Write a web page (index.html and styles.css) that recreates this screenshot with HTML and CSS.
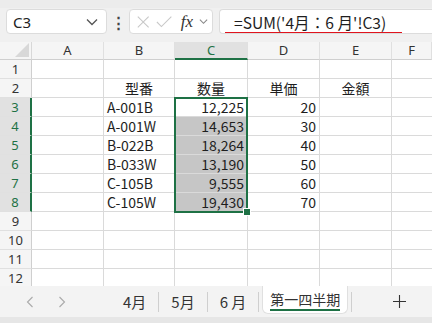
FILE: index.html
```html
<html>
<head>
	<title>第一四半期</title>
	<link rel="stylesheet" href="styles.css">
</head>
<body>
	<div class="top"></div>
	<div class="fbar">
		<div class="namebox"><span>C3</span><svg width="12" height="8" viewBox="0 0 12 8"><path d="M1 1.5 L6 6.5 L11 1.5" fill="none" stroke="#555" stroke-width="1.3"/></svg></div>
		<div class="dots">⋮</div>
		<div class="fxbox">
			<svg width="16" height="16" viewBox="0 0 16 16"><path d="M2 2 L14 14 M14 2 L2 14" stroke="#c8c8c8" stroke-width="1.2"/></svg>
			<svg width="18" height="16" viewBox="0 0 18 16"><path d="M1 8 L6 13 L17 2" fill="none" stroke="#c8c8c8" stroke-width="1.2"/></svg>
			<span class="fx">fx</span>
			<svg width="10" height="7" viewBox="0 0 10 7"><path d="M1 1.5 L5 5.5 L9 1.5" fill="none" stroke="#888" stroke-width="1.2"/></svg>
		</div>
		<div class="formula"><span>=SUM('4月：6 月'!C3)</span></div>
	</div>
	<div class="gap"></div>
	<div class="sheet">
		<div class="corner"><svg width="14" height="14" viewBox="0 0 14 14"><path d="M14 0 L14 14 L0 14 Z" fill="#d8d8d8"/></svg></div>
		<div class="ch">A</div><div class="ch">B</div><div class="ch sel">C</div><div class="ch">D</div><div class="ch">E</div><div class="ch last">F</div>

		<div class="rh">1</div><div class="c"></div><div class="c"></div><div class="c"></div><div class="c"></div><div class="c"></div><div class="c last"></div>
		<div class="rh">2</div><div class="c"></div><div class="c ctr">型番</div><div class="c ctr">数量</div><div class="c ctr">単価</div><div class="c ctr">金額</div><div class="c last"></div>
		<div class="rh on">3</div><div class="c"></div><div class="c">A-001B</div><div class="c num act">12,225</div><div class="c num">20</div><div class="c"></div><div class="c last"></div>
		<div class="rh on">4</div><div class="c"></div><div class="c">A-001W</div><div class="c num hl">14,653</div><div class="c num">30</div><div class="c"></div><div class="c last"></div>
		<div class="rh on">5</div><div class="c"></div><div class="c">B-022B</div><div class="c num hl">18,264</div><div class="c num">40</div><div class="c"></div><div class="c last"></div>
		<div class="rh on">6</div><div class="c"></div><div class="c">B-033W</div><div class="c num hl">13,190</div><div class="c num">50</div><div class="c"></div><div class="c last"></div>
		<div class="rh on">7</div><div class="c"></div><div class="c">C-105B</div><div class="c num hl">9,555</div><div class="c num">60</div><div class="c"></div><div class="c last"></div>
		<div class="rh on">8</div><div class="c"></div><div class="c">C-105W</div><div class="c num hl">19,430</div><div class="c num">70</div><div class="c"></div><div class="c last"></div>
		<div class="rh">9</div><div class="c"></div><div class="c"></div><div class="c"></div><div class="c"></div><div class="c"></div><div class="c last"></div>
		<div class="rh">10</div><div class="c"></div><div class="c"></div><div class="c"></div><div class="c"></div><div class="c"></div><div class="c last"></div>
		<div class="rh">11</div><div class="c"></div><div class="c"></div><div class="c"></div><div class="c"></div><div class="c"></div><div class="c last"></div>
		<div class="rh">12</div><div class="c"></div><div class="c"></div><div class="c"></div><div class="c"></div><div class="c"></div><div class="c last"></div>

		<div class="selbox"><div class="handle"></div></div>
	</div>
	<div class="tabs">
		<div class="arrows">
			<svg width="8" height="12" viewBox="0 0 8 12"><path d="M6.5 1 L1.5 6 L6.5 11" fill="none" stroke="#aaa" stroke-width="1.1"/></svg>
			<svg width="8" height="12" viewBox="0 0 8 12"><path d="M1.5 1 L6.5 6 L1.5 11" fill="none" stroke="#aaa" stroke-width="1.1"/></svg>
		</div>
		<div class="tab">4月</div>
		<div class="sep"></div>
		<div class="tab">5月</div>
		<div class="sep"></div>
		<div class="tab">6 月</div>
		<div class="sep"></div>
		<div class="tab active"><span>第一四半期</span></div>
		<div class="sep"></div>
		<div class="plus"><svg width="13" height="13" viewBox="0 0 13 13"><path d="M6.5 0 V13 M0 6.5 H13" stroke="#333" stroke-width="1.1"/></svg></div>
	</div>
	<div class="bottom"></div>
</body>
</html>
```

FILE: styles.css
```css
body {
	margin: 0;
	width: 432px;
	height: 323px;
	overflow: hidden;
	background-color: #f0f0f0;
	font-family: "Noto Sans", "Noto Sans CJK JP", sans-serif;
	color: #1e1e1e;
}

.top {
	height: 8px;
	background-color: #ececec;
}

.fbar {
	display: flex;
	align-items: center;
	height: 27px;
	padding-left: 6px;
}

.namebox {
	width: 101px;
	height: 25px;
	box-sizing: border-box;
	background-color: white;
	border: 1px solid #dcdcdc;
	border-radius: 4px;
	display: flex;
	align-items: center;
	justify-content: space-between;
	padding: 0 8px 0 6px;
	font-size: 15px;
}

.namebox span {
	color: #222;
}

.dots {
	width: 22px;
	text-align: center;
	font-size: 15px;
	font-weight: bold;
	color: #444;
}

.fxbox {
	width: 84px;
	height: 25px;
	box-sizing: border-box;
	background-color: white;
	border: 1px solid #dcdcdc;
	border-radius: 4px;
	display: flex;
	align-items: center;
	padding: 0 4px 0 6px;
	gap: 6px;
}

.fx {
	font-family: "Liberation Serif", serif;
	font-style: italic;
	font-size: 17px;
	color: #333;
	margin-left: 2px;
}

.formula {
	margin-left: 6px;
	flex: 1;
	height: 25px;
	box-sizing: border-box;
	background-color: white;
	border: 1px solid #dcdcdc;
	border-right: none;
	border-radius: 4px 0 0 4px;
	padding-left: 5px;
	display: flex;
	align-items: center;
}

.formula span {
	font-family: "Noto Sans CJK JP", sans-serif;
	font-size: 15.6px;
	line-height: 20px;
	color: #1e1e1e;
	padding: 0 16px 0 9px;
	border-bottom: 1px solid #e0141e;
	margin-top: 1px;
	white-space: nowrap;
}

.gap {
	height: 7px;
	background-color: #f0f0f0;
}

.sheet {
	position: relative;
	display: grid;
	grid-template-columns: 32px 72px 71px 73px 72px 72px 40px;
	grid-template-rows: 18px repeat(12, 19px);
	height: 244px;
	overflow: hidden;
	background-color: white;
}

.corner {
	background-color: #f5f5f5;
	border-right: 1px solid #d8d8d8;
	border-bottom: 1px solid #cfcfcf;
	display: flex;
	align-items: flex-end;
	justify-content: flex-end;
	padding: 0 2px 2px 0;
	box-sizing: border-box;
}

.ch {
	background-color: #f5f5f5;
	border-right: 1px solid #e0e0e0;
	border-bottom: 1px solid #cfcfcf;
	text-align: center;
	font-size: 13px;
	line-height: 17px;
	color: #333;
}

.ch.sel {
	background-color: #e1e1e1;
	border-bottom: 2px solid #1e7145;
	color: #1e7145;
}

.rh {
	background-color: #f5f5f5;
	border-right: 1px solid #cfcfcf;
	border-bottom: 1px solid #e0e0e0;
	text-align: center;
	font-size: 13px;
	line-height: 19px;
	color: #333;
}

.rh.on {
	background-color: #e1e1e1;
	border-right: 2px solid #1e7145;
	color: #1e7145;
}

.c {
	border-right: 1px solid #dadada;
	border-bottom: 1px solid #dadada;
	font-family: "Noto Sans CJK JP", sans-serif;
	font-size: 14px;
	line-height: 18px;
	padding: 0 3px;
	white-space: nowrap;
	overflow: hidden;
}

.c.ctr {
	text-align: center;
}

.c.num {
	text-align: right;
}

.c.hl {
	background-color: #c6c6c6;
}

.c.last {
	border-right: none;
}

.selbox {
	position: absolute;
	left: 174px;
	top: 55px;
	width: 74px;
	height: 116px;
	box-sizing: border-box;
	border: 2px solid #1e7145;
	pointer-events: none;
}

.handle {
	position: absolute;
	right: -5px;
	bottom: -5px;
	width: 6px;
	height: 6px;
	background-color: #1e7145;
	border: 1px solid white;
}

.tabs {
	display: flex;
	align-items: center;
	height: 31px;
	background-color: #f3f3f3;
	font-family: "Noto Sans CJK JP", sans-serif;
	font-size: 15px;
	color: #333;
	white-space: nowrap;
}

.arrows {
	display: flex;
	align-items: center;
	gap: 24px;
	width: 111px;
	flex-shrink: 0;
	padding-left: 26px;
	box-sizing: border-box;
}

.tab {
	padding: 0 12px;
	flex-shrink: 0;
}

.sep {
	width: 1px;
	height: 20px;
	background-color: #cfcfcf;
	flex-shrink: 0;
}

.tab.active {
	background-color: white;
	height: 28px;
	width: 86px;
	align-self: flex-start;
	box-sizing: border-box;
	border-radius: 0 0 6px 6px;
	border: 1px solid #e0e0e0;
	border-top: none;
	padding: 0;
	margin: 0 3px;
	display: flex;
	align-items: center;
	justify-content: center;
}

.tab.active span {
	border-bottom: 2px solid #1e7145;
	line-height: 20px;
	font-size: 14px;
}

.plus {
	margin-left: 41px;
	display: flex;
}

.bottom {
	height: 6px;
	background-color: #e6e6e6;
}
```
